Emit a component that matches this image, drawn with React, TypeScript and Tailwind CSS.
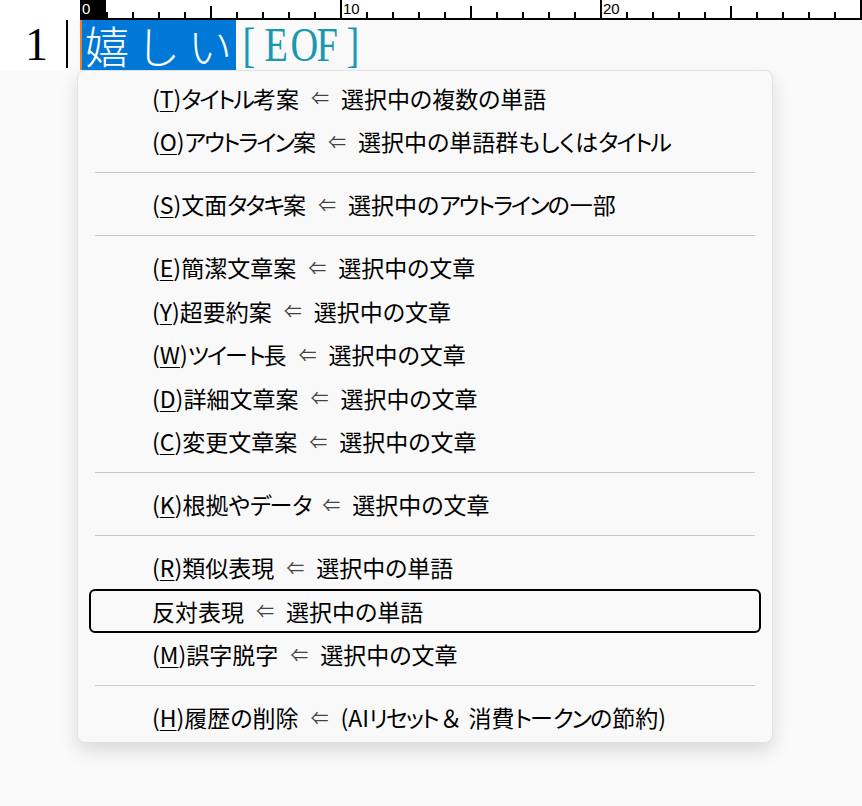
import React from "react";

type MenuEntry =
  | { kind: "item"; accel?: string; label: string; source: string; focused?: boolean }
  | { kind: "sep" };

const entries: MenuEntry[] = [
  { kind: "item", accel: "T", label: "タイトル考案", source: "選択中の複数の単語" },
  { kind: "item", accel: "O", label: "アウトライン案", source: "選択中の単語群もしくはタイトル" },
  { kind: "sep" },
  { kind: "item", accel: "S", label: "文面タタキ案", source: "選択中のアウトラインの一部" },
  { kind: "sep" },
  { kind: "item", accel: "E", label: "簡潔文章案", source: "選択中の文章" },
  { kind: "item", accel: "Y", label: "超要約案", source: "選択中の文章" },
  { kind: "item", accel: "W", label: "ツイート長", source: "選択中の文章" },
  { kind: "item", accel: "D", label: "詳細文章案", source: "選択中の文章" },
  { kind: "item", accel: "C", label: "変更文章案", source: "選択中の文章" },
  { kind: "sep" },
  { kind: "item", accel: "K", label: "根拠やデータ", source: "選択中の文章" },
  { kind: "sep" },
  { kind: "item", accel: "R", label: "類似表現", source: "選択中の単語" },
  { kind: "item", label: "反対表現", source: "選択中の単語", focused: true },
  { kind: "item", accel: "M", label: "誤字脱字", source: "選択中の文章" },
  { kind: "sep" },
  { kind: "item", accel: "H", label: "履歴の削除", source: "(AIリセット＆消費トークンの節約)" },
];

// katakana in the UI font is set tighter than ideographs
function Kana({ text }: { text: string }) {
  const parts = text.split(/([\u30A1-\u30FA]+|＆)/);
  return (
    <>
      {parts.map((p, i) => {
        if (p === "＆") {
          return (
            <span key={i} className="pl-[2px] pr-[6px] [font-feature-settings:normal]">
              {p}
            </span>
          );
        }
        if (/^[\u30A1-\u30FA]+$/.test(p)) {
          return (
            <span key={i} className="tracking-[-2px]">
              {p}
            </span>
          );
        }
        return <span key={i}>{p}</span>;
      })}
    </>
  );
}

function Ruler() {
  const cells = Array.from({ length: 31 }, (_, i) => i);
  return (
    <div className="flex h-[20px] bg-white font-['Liberation_Sans',sans-serif]">
      <div className="w-[80px] shrink-0" />
      <div className="flex flex-1 overflow-hidden border-b-2 border-black">
        {cells.map((i) => {
          if (i === 0) {
            return (
              <div key={i} className="h-full w-[26px] shrink-0 bg-black pl-[2px] pt-[1px] text-[15px] leading-[16px] text-white">
                0
              </div>
            );
          }
          if (i % 10 === 0) {
            return (
              <div key={i} className="flex h-full w-[26px] shrink-0 items-end">
                <div className="h-full w-[2px] bg-black" />
                {i < 30 ? (
                  <span className="self-start pl-[1px] pt-[1px] text-[15px] leading-[16px] text-black">{i}</span>
                ) : null}
              </div>
            );
          }
          return (
            <div key={i} className="flex h-full w-[26px] shrink-0 items-end">
              <div className={`w-[2px] bg-black ${i % 5 === 0 ? "h-[12px]" : "h-[6px]"}`} />
            </div>
          );
        })}
      </div>
    </div>
  );
}

function EditorLine() {
  return (
    <div className="flex h-[50px]">
      <div className="flex w-[66px] shrink-0 items-center justify-end bg-white pr-[18px] font-['Liberation_Serif',serif] text-[46px] leading-none text-black">
        1
      </div>
      <div className="mb-[2px] w-[2px] shrink-0 bg-black" />
      <div className="w-[12px] shrink-0" />
      <div className="flex h-[50px] bg-[#0078d7] font-['Noto_Sans_CJK_JP',sans-serif] text-[44px] font-light leading-[50px] text-white">
        <div className="w-[2px] bg-[#e8822a]" />
        {["嬉", "し", "い"].map((c, idx) => (
          <span key={c} className={`text-center ${idx === 0 ? "w-[50px]" : "w-[52px]"}`}>
            {c}
          </span>
        ))}
      </div>
      <div className="flex h-[50px] font-['Liberation_Serif',serif] text-[48px] leading-[50px] text-[#1a98b0]">
        {["[", "E", "O", "F", "]"].map((c, idx) => (
          <span key={idx} className="inline-block w-[26px] scale-x-[0.8] text-center">
            {c}
          </span>
        ))}
      </div>
    </div>
  );
}

function ContextMenu() {
  return (
    <div className="ml-[77px] w-[696px] rounded-[8px] border border-[#e3e3e3] bg-[#f9f9f9] px-[11px] pb-[3px] pt-[5px] shadow-[0_8px_18px_rgba(0,0,0,0.13)] [font-feature-settings:'palt']">
      {entries.map((entry, idx) =>
        entry.kind === "sep" ? (
          <div key={idx} className="flex h-[19.5px] items-center px-[6px]">
            <div className="h-px w-full bg-[#c9c9c9]" />
          </div>
        ) : (
          <div
            key={idx}
            className={`flex h-[43.5px] items-center whitespace-nowrap rounded-[6px] text-[23px] text-black ${
              entry.focused ? "border-2 border-black pl-[61px]" : "pl-[63px]"
            }`}
          >
            {entry.accel ? (
              <span>
                (<span className="underline decoration-1 underline-offset-[3px]">{entry.accel}</span>)
              </span>
            ) : null}
            <Kana text={entry.label} />
            <span className="px-[12px] text-[18px] text-[#444]">⇐</span>
            <Kana text={entry.source} />
          </div>
        )
      )}
    </div>
  );
}

export default function App() {
  return (
    <div className="min-h-screen w-full bg-[#fafafa] font-['Noto_Sans_CJK_JP',sans-serif]">
      <Ruler />
      <EditorLine />
      <ContextMenu />
    </div>
  );
}
